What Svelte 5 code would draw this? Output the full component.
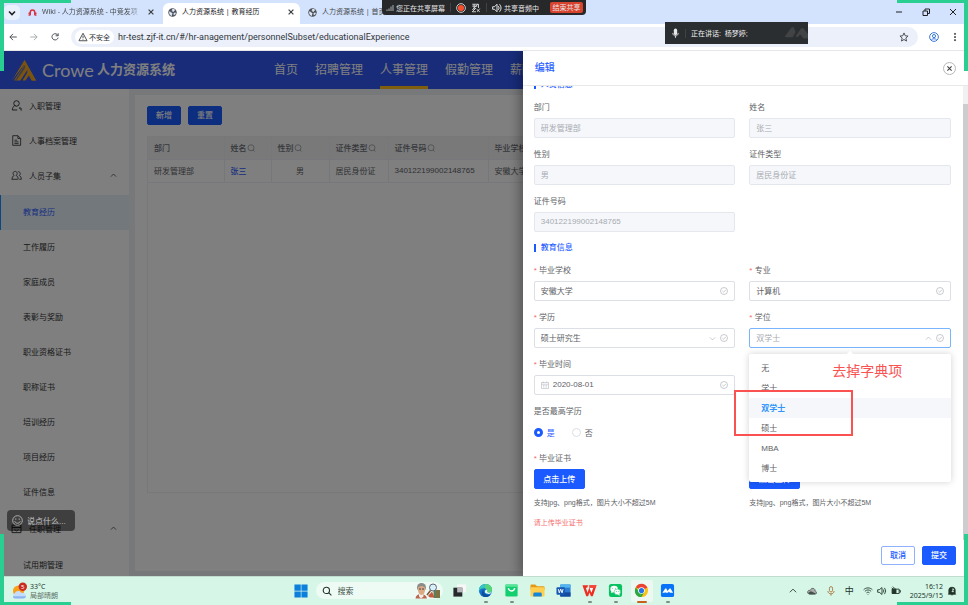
<script lang="ts">
  type MenuItem = { label: string; icon?: string; active?: boolean; children?: MenuItem[] };

  const nav = ['首页', '招聘管理', '人事管理', '假勤管理', '薪酬管理'];

  const menu: MenuItem[] = [
    { label: '入职管理', icon: 'user' },
    { label: '人事档案管理', icon: 'file' },
    {
      label: '人员子集',
      icon: 'users',
      children: [
        { label: '教育经历', active: true },
        { label: '工作履历' },
        { label: '家庭成员' },
        { label: '表彰与奖励' },
        { label: '职业资格证书' },
        { label: '职称证书' },
        { label: '培训经历' },
        { label: '项目经历' },
        { label: '证件信息' },
      ],
    },
    { label: '任职管理', icon: 'box', children: [{ label: '试用期管理' }] },
  ];

  const columns = [
    { label: '部门', search: false },
    { label: '姓名', search: true },
    { label: '性别', search: true },
    { label: '证件类型', search: true },
    { label: '证件号码', search: true },
    { label: '毕业学校', search: true },
  ];

  const personFields = [
    { id: 'dept', label: '部门', value: '研发管理部' },
    { id: 'name', label: '姓名', value: '张三' },
    { id: 'gender', label: '性别', value: '男' },
    { id: 'idType', label: '证件类型', value: '居民身份证' },
    { id: 'idNo', label: '证件号码', value: '340122199002148765' },
  ];

  const degrees = ['无', '学士', '双学士', '硕士', 'MBA', '博士'];
  const apps = ['tasks', 'edge', 'mail', 'folder', 'word', 'wps', 'wechat', 'chrome', 'meeting'];
  const running = ['edge', 'mail', 'wps', 'wechat', 'meeting'];

  let school = $state('安徽大学');
  let major = $state('计算机');
  let education = $state('硕士研究生');
  let degree = $state('双学士');
  let graduated = $state('2020-08-01');
  let highest = $state('yes');
</script>

{#snippet globe()}
  <svg class="globe" viewBox="0 0 16 16">
    <circle cx="8" cy="8" r="7.5" fill="#4d5156" />
    <path d="M2 6c2 0 3 1 4 2s2 1 2 2-1 1-1 2v2C4 14 2 11 2 8zM7 2c2-1 5 0 6 2l-2 1-1 2-2-1-2-1 2-1zM10 9l3-1 1 1c0 2-2 4-4 4z" fill="#dbe6f8" />
  </svg>
{/snippet}

{#snippet cross()}
  <svg class="cross" viewBox="0 0 10 10"><path d="M2 2l6 6M8 2l-6 6" stroke="#3c4043" stroke-width="1.5" /></svg>
{/snippet}

{#snippet check()}
  <svg class="check" viewBox="0 0 16 16" fill="none" stroke="#a4a8b0" stroke-width="1.2">
    <circle cx="8" cy="8" r="7" /><path d="M4.8 8l2.4 2.4 4.4-4.6" />
  </svg>
{/snippet}

{#snippet arrow(up: boolean)}
  <svg class="arrow" class:up viewBox="0 0 12 12" fill="none" stroke="currentColor" stroke-width="1.2"><path d="M1.5 4l4.500 4.500 4.500-4.500" /></svg>
{/snippet}

{#snippet menuIcon(name: string)}
  <svg class="menu-icon" viewBox="0 0 16 16" fill="none" stroke="#303133" stroke-width="1.4">
    {#if name === 'user'}
      <circle cx="8" cy="5" r="4" /><path d="M5.500 8C3 9.500 2 12 2 14.500h7M6 8l1 1M12 11.500l2 2 1-1-2-1.500zM14 14.500h2" />
    {:else if name === 'file'}
      <path d="M2.500 1h7.500l4 4v10h-11.500zM10 1v4h4M5 7.500h4M5 10h6M5 12.500h6" stroke-width="1.2" />
    {:else if name === 'users'}
      <path d="M1 13.500h9M1.500 13.500c0-3 1-4.500 3-5.500-3-3-1-6 1.500-6s4.500 3 1.500 6c2 1 3 2.500 3 5.500M10 2.500c3-.5 5 3 2 5.500 2 1 3 2.500 3 5.500h-3" stroke-width="1.2" />
    {:else}
      <path d="M1.500 3h13v11h-13zM1.500 6.500h13M5 9.500l3 2 3-2" />
    {/if}
  </svg>
{/snippet}

{#snippet appIcon(name: string)}
  <svg viewBox="0 0 32 32">
    {#if name === 'tasks'}
      <path d="M11 3h19v17H11z" fill="#f7f7f7" /><path d="M3 10h19v19H3z" fill="#26282b" /><path d="M11 10h11v10H11z" fill="#b7babb" />
    {:else if name === 'edge'}
      <circle cx="16" cy="16" r="14" fill="#1474c9" />
      <path d="M2 16C2 8 8 2 16 2s14 6 14 12c0 5-4 7-8 7-3 0-5-1-3-3 2-3-1-7-6-7-6 0-11 3-11 8z" fill="#35c6c0" />
      <path d="M16 2c8 0 14 6 14 12 0 5-4 7-8 7-3 0-5-1-3-3 2-3-1-6-4-7z" fill="#58d675" />
      <path d="M12 14c-2 8 5 13 14 11-3 4-7 5-11 5-7-1-10-10-3-16z" fill="#0d4e9c" />
      <path d="M18 14c4 2-1 5 3 6 4 2 8-1 9-3-1 5-5 7-10 6-5 0-8-6-2-9z" fill="#e8f8f3" />
    {:else if name === 'mail'}
      <rect x="3" y="3" width="26" height="26" rx="3" fill="#12cf70" /><path d="M3 3h26v5H3z" fill="#5ce59a" />
      <path d="M9 11c2 8 12 8 14 0" fill="none" stroke="#fff" stroke-width="3" />
    {:else if name === 'folder'}
      <path d="M1 5q0-2 2-2h8l4 4h14q2 0 2 2v6H1z" fill="#e29a14" /><rect x="1" y="9" width="30" height="20" rx="2" fill="#ffd04f" />
      <path d="M7 29v-6q0-3 3-3h12q3 0 3 3v6z" fill="#1684d8" />
    {:else if name === 'word'}
      <rect x="9" y="3" width="22" height="26" rx="2" fill="#2b7cd3" /><path d="M9 3h22v7H9z" fill="#51b5f0" /><path d="M9 20h22v9H9z" fill="#124a9d" />
      <rect x="1" y="9" width="18" height="16" rx="2" fill="#1659b3" /><path d="M5 13l2 8 3-8 3 8 2-8" fill="none" stroke="#fff" stroke-width="2" />
    {:else if name === 'wps'}
      <path d="M1 5h12l-2 5H8l4 11 5-16h14l-8 23h-4l-3-8-3 8H9z" fill="#ef2e22" /><path d="M16 10h8l-4 11z" fill="#fff" /><path d="M14 5h17l-2 5H17z" fill="#f9463b" />
    {:else if name === 'wechat'}
      <rect x="2" y="2" width="28" height="28" rx="5" fill="#08c160" />
      <ellipse cx="13" cy="13" rx="8" ry="7" fill="#fff" /><path d="M7 17v5l5-3z" fill="#fff" />
      <ellipse cx="20" cy="19" rx="7" ry="6" fill="#fff" stroke="#08c160" /><path d="M24 23l1 4-4-2z" fill="#fff" />
      <g fill="#08c160"><circle cx="10" cy="11" r="1" /><circle cx="16" cy="11" r="1" /><circle cx="18" cy="18" r="1" /><circle cx="23" cy="18" r="1" /></g>
    {:else if name === 'chrome'}
      <circle cx="16" cy="16" r="14" fill="#fbc116" />
      <path d="M16 16L4 9C9-1 24-1 28.500 10z" fill="#ea4335" /><path d="M4 9l9 15 3 6C3 30-1 18 4 9z" fill="#28a745" /><path d="M16 30l6-11-6-2-6 1z" fill="#28a745" />
      <circle cx="16" cy="16" r="7" fill="#fff" /><circle cx="16" cy="16" r="5.500" fill="#2374e8" />
    {:else}
      <rect x="2" y="2" width="28" height="28" rx="4" fill="#0872f9" />
      <path d="M5 21l6-9q2-2 3 1l2 4 4-5q2-2 3 1l5 8h-7l-2-3-2 3H12l-1-2-1 2z" fill="#fff" />
    {/if}
  </svg>
{/snippet}

<div class="desktop">
  <div class="tabs">
    <button class="tab-search" aria-label="搜索标签页">
      <svg viewBox="0 0 10 10" fill="none" stroke="#202124" stroke-width="1.600"><path d="M2 3.500l3 3 3-3" /></svg>
    </button>
    <div class="tab first">
      <svg class="globe" viewBox="0 0 16 16" fill="none" stroke="#d8313f" stroke-width="2.500"><path d="M1 13l3-1V8a4 4.500 0 0 1 8 0v4l3 1M4 8L1 10M12 8l3 2" /></svg>
      <span class="tab-title fade">Wiki - 人力资源系统 - 中竞发项</span>
      {@render cross()}
    </div>
    <div class="tab active">
      {@render globe()}
      <span class="tab-title">人力资源系统 | 教育经历</span>
      {@render cross()}
    </div>
    <div class="tab">
      {@render globe()}
      <span class="tab-title">人力资源系统 | 首页</span>
    </div>
    <div class="window-controls">
      <svg viewBox="0 0 10 10"><path d="M2 5h6" /></svg>
      <svg viewBox="0 0 10 10"><path d="M2 4h4.500v4.500H2zM4 4V2h4.500v4.500h-2" /></svg>
      <svg viewBox="0 0 10 10"><path d="M2 2l6 6M8 2L2 8" /></svg>
    </div>
  </div>

  <div class="toolbar">
    <svg viewBox="0 0 16 16"><path d="M14 8H3M8 3L3 8l5 5" /></svg>
    <svg class="dim" viewBox="0 0 16 16"><path d="M2 8h11M8 3l5 5-5 5" /></svg>
    <svg viewBox="0 0 16 16"><path d="M13 9a5 5 0 1 1-1.500-5L13 5.500M13 2v4H9" /></svg>
    <div class="address">
      <span class="chip">
        <svg viewBox="0 0 16 16"><path d="M8 2l6.500 12h-13zM8 6v4M8 11.500v1" /></svg>
        不安全
      </span>
      <input class="url" aria-label="地址" value="hr-test.zjf-it.cn/#/hr-anagement/personnelSubset/educationalExperience" />
      <svg viewBox="0 0 16 16"><path d="M8 1.500l2 4.500 4.500.5-3.500 3 1 5-4-2.500L4 14.500l1-5-3.500-3L6 6z" /></svg>
    </div>
    <svg class="profile" viewBox="0 0 16 16"><circle cx="8" cy="8" r="7" /><circle cx="8" cy="6.500" r="2.500" /><path d="M3.500 13c2-3 7-3 9 0" /></svg>
    <svg class="kebab" viewBox="0 0 16 16"><circle cx="8" cy="3" r="1" /><circle cx="8" cy="8" r="1" /><circle cx="8" cy="13" r="1" /></svg>
  </div>

  <div class="page">
    <header class="app-header">
      <svg class="logo" viewBox="0 0 48 42">
        <path d="M0 41L25 0l23 41h-8L26 13 9 41h-5l22-34z" fill="#f5a81c" />
        <path d="M9 41L27 14l4 6-14 21zM21 41l11-18 3 6-8 12z" fill="#f5a81c" />
        <path d="M25 0l23 41h-9L24 12z" fill="#f5a81c" />
        <path d="M7 41L26 11M18 41l13-20" stroke="#3058f0" stroke-width="1.500" />
      </svg>
      <span class="brand">Crowe</span>
      <h1>人力资源系统</h1>
      <nav>
        {#each nav as item (item)}
          <a href="#/{item}" class:current={item === '人事管理'}>{item}</a>
        {/each}
      </nav>
    </header>

    <div class="app-body">
      <aside>
        {#each menu as item (item.label)}
          <a class="menu-item" href="#/{item.label}">
            {@render menuIcon(item.icon ?? '')}
            <span>{item.label}</span>
            {#if item.children}{@render arrow(true)}{/if}
          </a>
          {#if item.children}
            <div class="submenu">
              {#each item.children as child (child.label)}
                <a class="menu-item child" class:active={child.active} href="#/{child.label}">{child.label}</a>
              {/each}
            </div>
          {/if}
        {/each}
      </aside>

      <main>
        <div class="actions">
          <button class="btn primary">新增</button>
          <button class="btn primary">重置</button>
        </div>
        <div class="table-wrap">
          <table>
            <colgroup>
              <col class="c-dept" /><col class="c-name" /><col class="c-gender" /><col class="c-type" /><col class="c-no" /><col />
            </colgroup>
            <thead>
              <tr>
                {#each columns as column (column.label)}
                  <th>
                    {column.label}{#if column.search}
                      <svg viewBox="0 0 16 16" fill="none" stroke="#909399" stroke-width="1.500"><circle cx="8" cy="7.500" r="6" /><path d="M12 12l3 3" /></svg>
                    {/if}
                  </th>
                {/each}
              </tr>
            </thead>
            <tbody>
              <tr>
                <td>研发管理部</td>
                <td><a href="#/detail">张三</a></td>
                <td class="center">男</td>
                <td>居民身份证</td>
                <td>340122199002148765</td>
                <td>安徽大学</td>
              </tr>
            </tbody>
          </table>
        </div>
      </main>
    </div>

    <div class="mask"></div>

    <section class="drawer">
      <header class="drawer-header">
        <h2>编辑</h2>
        <button class="close" aria-label="关闭">{@render cross()}</button>
      </header>

      <div class="drawer-body">
        <form class="grid">
          <h3 class="top">人员信息</h3>
          {#each personFields as field (field.id)}
            <div class="field">
              <label for={field.id}>{field.label}</label>
              <div class="control disabled"><input id={field.id} value={field.value} disabled /></div>
            </div>
          {/each}

          <h3>教育信息</h3>
          <div class="field required">
            <label for="school">毕业学校</label>
            <div class="control"><input id="school" bind:value={school} />{@render check()}</div>
          </div>
          <div class="field required">
            <label for="major">专业</label>
            <div class="control"><input id="major" bind:value={major} />{@render check()}</div>
          </div>
          <div class="field required">
            <label for="education">学历</label>
            <div class="control">
              <select id="education" bind:value={education}><option>硕士研究生</option></select>
              {@render arrow(false)}{@render check()}
            </div>
          </div>
          <div class="field required">
            <label for="degree">学位</label>
            <div class="control open">
              <select id="degree" bind:value={degree}>
                {#each degrees as option (option)}<option>{option}</option>{/each}
              </select>
              {@render arrow(true)}{@render check()}
              <div class="dropdown">
                <ul>
                  {#each degrees as option (option)}
                    <li class:selected={option === degree}>{option}</li>
                  {/each}
                </ul>
                <span class="note">去掉字典项</span>
                <span class="note-box"></span>
              </div>
            </div>
          </div>
          <div class="field required wide">
            <label for="graduated">毕业时间</label>
            <div class="control">
              <svg class="calendar" viewBox="0 0 16 16" fill="none" stroke="#b4b8c0" stroke-width="1.200"><path d="M1 3h14v12H1zM1 6.500h14M4.500 1v3M11.500 1v3M4 9h2M7 9h2M10 9h2M4 12h2M7 12h2M10 12h2" /></svg>
              <input id="graduated" bind:value={graduated} />{@render check()}
            </div>
          </div>
          <div class="field wide" role="radiogroup" aria-label="是否最高学历">
            <span class="label">是否最高学历</span>
            <div class="radios">
              <label class:on={highest === 'yes'}><input type="radio" value="yes" bind:group={highest} />是</label>
              <label class:on={highest === 'no'}><input type="radio" value="no" bind:group={highest} />否</label>
            </div>
          </div>
          <div class="field required">
            <span class="label">毕业证书</span>
            <button type="button" class="btn primary upload">点击上传</button>
            <p class="hint">支持jpg、png格式，图片大小不超过5M</p>
            <p class="error">请上传毕业证书</p>
          </div>
          <div class="field required">
            <span class="label">学位证书</span>
            <button type="button" class="btn primary upload">点击上传</button>
            <p class="hint">支持jpg、png格式，图片大小不超过5M</p>
          </div>
        </form>
        <div class="scrollbar"></div>
      </div>

      <footer class="drawer-footer">
        <button class="btn">取消</button>
        <button class="btn primary">提交</button>
      </footer>
    </section>

    <div class="chat">
      <svg viewBox="0 0 16 16" fill="none" stroke="#c4c4c4" stroke-width="1.200"><circle cx="8" cy="8" r="7" /><path d="M4 9c1 4 7 4 8 0M5.500 5v2M10.500 5v2" /></svg>
      说点什么...
    </div>
  </div>

  <footer class="taskbar">
    <div class="weather">
      <svg viewBox="0 0 32 36">
        <circle cx="14" cy="18" r="12" fill="#f6a21c" />
        <path d="M6 34a6 6 0 0 1 0-11c2-6 11-7 14-1 6-1 11 3 10 8q-1 4-6 4z" fill="#c6dcfb" /><path d="M6 34q-5-1-4-5h28q-1 5-6 5z" fill="#8cb5f0" />
        <circle cx="23" cy="9" r="9" fill="#c92c20" />
        <text x="23" y="14" text-anchor="middle" fill="#fff" font-size="13">5</text>
      </svg>
      <div><div>33°C</div><div class="muted">局部晴朗</div></div>
    </div>

    <div class="dock">
      <svg class="start" viewBox="0 0 32 32" fill="#0b7fdb"><path d="M1 1h14.500v14.500H1zM17 1h14v14.500H17zM1 17h14.500v14H1zM17 17h14v14H17z" /></svg>
      <label class="search">
        <svg viewBox="0 0 16 16" fill="none" stroke="#22352c" stroke-width="1.800"><circle cx="7" cy="7" r="5" /><path d="M11 11l4 4" /></svg>
        <input aria-label="搜索" placeholder="搜索" />
        <svg class="highlight" viewBox="0 0 52 32">
          <path d="M1 31q1-9 11-9t12 9z" fill="#b8674f" /><path d="M8 20h9v7l-5 4-4-4z" fill="#f2ede6" />
          <circle cx="13" cy="9" r="9" fill="#8b8b87" /><path d="M6 9q7-6 14 0v6q-1 8-7 9-6-1-7-9z" fill="#dda984" /><path d="M8 12h4M14 12h4" stroke="#444" stroke-width="2" />
          <path d="M37 14h13v16H37z" fill="#a4642c" /><path d="M40 14v16M46 14v16" stroke="#3d8a6b" stroke-width="3" />
          <path d="M26 26l8-9 5 12h-9z" fill="#c45b42" /><circle cx="36" cy="9" r="7" fill="#d9effa" stroke="#5b6974" stroke-width="2" /><path d="M31 15l-7 9" stroke="#74553a" stroke-width="3" />
        </svg>
      </label>
      {#each apps as app (app)}
        <button class="app" class:focused={app === 'chrome'} class:running={running.includes(app)} aria-label={app}>
          {@render appIcon(app)}
        </button>
      {/each}
    </div>

    <div class="tray">
      <svg viewBox="0 0 16 16"><path d="M3 10l5-5 5 5" /></svg>
      <svg viewBox="0 0 16 16"><path d="M4 13q-4-1-3-4t4-2q2-5 6-3 2 1 2 4 3 1 2 4l-2 1z" fill="#aaa" stroke="#5d6b64" /><path d="M2 11q4-4 6-2l6 3-2 1H4z" fill="#42524a" stroke="none" /></svg>
      <svg class="mic" viewBox="0 0 16 16"><rect x="5.500" y="1" width="5" height="8.500" rx="2.500" /><path d="M3 8c0 6 10 6 10 0M8 12.500v3" /></svg>
      <span class="ime">中</span>
      <div class="status">
        <svg viewBox="0 0 16 16"><path d="M1 6c4-4 10-4 14 0M3 8.500c3-3 7-3 10 0M5.500 11c1.500-1.500 3.500-1.500 5 0M8 13v1" /></svg>
        <svg viewBox="0 0 16 16"><path d="M1 6h2.500L8 2.500v11L3.500 10H1zM10 5.500q2 2.500 0 5M12 3q4 5 0 10" /></svg>
        <svg viewBox="0 0 16 16"><path d="M2 5h11v7H2zM13 7h2v3h-2" /><path d="M2 5h6v7H2zM3 1l3 3M1 3l3 2" fill="#22352c" /></svg>
      </div>
      <div class="clock"><div>16:12</div><div>2025/9/15</div></div>
      <svg viewBox="0 0 16 16"><path d="M3 12V6q0-4 5-4t5 4v6l1 1H2zM6 14h4" fill="#22352c" /><path d="M8 5h3l-3 4h3" stroke="#d6f7e8" /></svg>
    </div>
  </footer>

  <div class="share-bar">
    <svg viewBox="0 0 16 16" fill="none" stroke="#ddd" stroke-width="1.500"><path d="M2 14v-3M6 14V9M10 14V5M14 14V2" /></svg>
    <span>您正在共享屏幕</span>
    <i></i>
    <svg class="big" viewBox="0 0 16 16"><circle cx="8" cy="8" r="7" fill="none" stroke="#eee" stroke-width="1.300" /><circle cx="8" cy="8" r="5" fill="#f4502f" /></svg>
    <svg class="big" viewBox="0 0 16 16" fill="none" stroke="#eee" stroke-width="1.300"><path d="M2 2h10v6M2 14h6M2 5h8M5 2v9M2 11l9-9M2 14l6-6M9 10l5 4M14 9l-4 5" /></svg>
    <i></i>
    <svg class="big" viewBox="0 0 16 16" fill="none" stroke="#eee" stroke-width="1.500"><path d="M1 6h3l4-4v12l-4-4H1zM10 5q3 3 0 6M12 2q5 6 0 12" /></svg>
    <span>共享音频中</span>
    <button>结束共享</button>
  </div>

  <div class="speaking">
    <svg class="voice" viewBox="0 0 16 20"><rect x="5" y="1" width="6" height="12" rx="3" fill="#e8e8e8" /><path d="M3 9c0 7 10 7 10 0M8 14v4" fill="none" stroke="#e8e8e8" stroke-width="1.500" /></svg>
    <i></i>
    <span>正在讲话:&nbsp; 杨梦婷;</span>
    <svg class="mark" viewBox="0 0 66 40"><path d="M0 29L18 5q6-5 9 3l3 10-8 14H5q-6 0-5-3zM30 29L46 7q6-4 9 3l11 13v13H53l-9-12-8 8z" fill="#414345" /></svg>
  </div>

  <span class="corner tl"></span>
  <span class="corner tr"></span>
  <span class="corner bl"></span>
  <span class="corner br"></span>
</div>

<style>
  :global(body) {
    margin: 0;
    font-family: 'Liberation Sans', 'Noto Sans CJK SC', sans-serif;
  }

  .desktop {
    position: relative;
    display: flex;
    flex-direction: column;
    height: 100vh;
    overflow: hidden;
    font-size: 8px;
    color: #606266;
  }

  a {
    color: inherit;
    text-decoration: none;
  }

  button,
  input,
  select {
    font: inherit;
    color: inherit;
    box-sizing: border-box;
    margin: 0;
    padding: 0;
    border: none;
    background: none;
    outline: none;
  }

  svg {
    display: block;
    flex: none;
  }

  h1,
  h2,
  h3,
  p,
  ul {
    margin: 0;
    padding: 0;
    list-style: none;
  }

  /* browser chrome */
  .tabs {
    display: flex;
    align-items: stretch;
    height: 24px;
    flex: none;
    padding-left: 4px;
    background: #d3e3fd;
    font-family: 'Noto Sans', 'Noto Sans CJK SC', sans-serif;
    font-size: 7px;
    color: #45494d;
  }

  .tab-search {
    align-self: center;
    width: 16px;
    height: 15px;
    padding: 3px;
    border-radius: 5px;
    background: #e9f1fe;
  }

  .tab {
    display: flex;
    align-items: center;
    gap: 5px;
    box-sizing: border-box;
    width: 137px;
    padding: 0 5px;
    line-height: 24px;
  }

  .tab.first {
    width: 143px;
    padding-left: 8px;
    padding-right: 8px;
  }

  .tab.active {
    margin-top: 3px;
    margin-right: 3px;
    border-radius: 6px 6px 0 0;
    background: #fff;
    color: #202124;
    line-height: 18px;
    padding-bottom: 3px;
  }

  .tab-title {
    flex: 1;
    overflow: hidden;
    white-space: nowrap;
  }

  .fade {
    mask-image: linear-gradient(90deg, #000 85%, transparent);
  }

  .globe {
    width: 9px;
    height: 9px;
  }

  .cross {
    width: 8px;
    height: 8px;
  }

  .window-controls {
    display: flex;
    align-items: center;
    gap: 17px;
    margin-left: auto;
    padding-right: 10px;
  }

  .window-controls svg {
    width: 10px;
    height: 10px;
    fill: none;
    stroke: #202124;
  }

  .toolbar {
    display: flex;
    align-items: center;
    gap: 11px;
    height: 27px;
    flex: none;
    box-sizing: border-box;
    padding: 0 8px;
    border-bottom: 1px solid #e4e6ea;
    background: #fff;
  }

  .toolbar svg {
    width: 10px;
    height: 10px;
    fill: none;
    stroke: #45494d;
    stroke-width: 1.5;
  }

  .toolbar svg.dim {
    stroke: #a4a7ab;
  }

  .toolbar svg.profile {
    stroke: #2f6fd8;
  }

  .toolbar svg.kebab {
    fill: #45494d;
  }

  .address {
    display: flex;
    align-items: center;
    flex: 1;
    height: 20px;
    box-sizing: border-box;
    padding: 0 9px 0 4px;
    border-radius: 10px;
    background: #ebf0fa;
    font-family: Roboto, 'Noto Sans CJK SC', sans-serif;
  }

  .chip {
    display: flex;
    align-items: center;
    gap: 1px;
    height: 14px;
    padding: 0 4px 0 3px;
    border-radius: 7px;
    background: #fff;
    font-size: 7px;
    color: #303338;
  }

  .url {
    flex: 1;
    min-width: 0;
    margin-left: 4px;
    font-size: 9px;
    color: #33373c;
  }

  /* application */
  .page {
    position: relative;
    display: flex;
    flex-direction: column;
    flex: 1;
    min-height: 0;
    overflow: hidden;
    background: #eff0f2;
  }

  .app-header {
    display: flex;
    align-items: center;
    flex: none;
    height: 38px;
    padding-left: 12px;
    background: #3058f4;
    color: #fff;
  }

  .logo {
    width: 24px;
    height: 21px;
  }

  .brand {
    margin-left: 6px;
    width: 55px;
    font-family: Lato, sans-serif;
    font-size: 18px;
    font-weight: 400;
  }

  h1 {
    font-size: 13px;
    line-height: 38px;
  }

  nav {
    display: flex;
    gap: 17px;
    margin-left: 99px;
    font-size: 12px;
    line-height: 38px;
    white-space: nowrap;
  }

  nav a {
    height: 38px;
    box-sizing: border-box;
  }

  nav a.current {
    border-bottom: 3px solid #ffbe1a;
  }

  .app-body {
    display: flex;
    flex: 1;
    min-height: 0;
    gap: 6px;
  }

  aside {
    width: 129px;
    flex: none;
    overflow: hidden;
    background: #fff;
    color: #303133;
  }

  .menu-item {
    display: flex;
    align-items: center;
    box-sizing: border-box;
    height: 35px;
    padding: 0 12px 2px 11px;
  }

  .menu-item span {
    flex: 1;
    margin-left: 7px;
  }

  .menu-item.child {
    padding-left: 23px;
  }

  .menu-item.active {
    border-left: 1px solid #1890ff;
    padding-left: 22px;
    background: #e6f1fb;
    color: #2a5bff;
  }

  .submenu {
    padding: 1px 0 2px;
  }

  .menu-icon {
    width: 11px;
    height: 11px;
  }

  .arrow {
    width: 7px;
    height: 7px;
  }

  .arrow.up {
    transform: rotate(180deg);
  }

  main {
    display: flex;
    flex-direction: column;
    flex: 1;
    min-width: 0;
    box-sizing: border-box;
    margin: 6px 6px 5px 0;
    padding: 11px 12px 78px;
    background: #fff;
  }

  .actions {
    display: flex;
    gap: 7px;
    margin-bottom: 11px;
  }

  .btn {
    height: 19px;
    box-sizing: border-box;
    padding: 0 8px;
    min-width: 34px;
    border: 1px solid #8fb0ff;
    border-radius: 2px;
    background: #fff;
    color: #1a5aff;
    line-height: 17px;
    font-weight: 500;
  }

  .btn.primary {
    border-color: #1a5aff;
    background: #1a5aff;
    color: #fff;
  }

  .table-wrap {
    flex: 1;
    border: 1px solid #f0f1f5;
  }

  table {
    width: 100%;
    table-layout: fixed;
    border-collapse: collapse;
  }

  .c-dept {
    width: 76px;
  }

  .c-name {
    width: 47px;
  }

  .c-gender {
    width: 58px;
  }

  .c-type {
    width: 59px;
  }

  .c-no {
    width: 100px;
  }

  th,
  td {
    height: 20px;
    padding: 0 0 2px 6px;
    border-right: 1px solid #ebeef5;
    border-bottom: 1px solid #ebeef5;
    text-align: left;
    white-space: nowrap;
  }

  th {
    background: #f3f3f4;
    font-weight: 500;
    color: #6b6e75;
  }

  th svg {
    display: inline-block;
    width: 8px;
    height: 8px;
    vertical-align: -1px;
  }

  td.center {
    padding-left: 0;
    text-align: center;
  }

  td a {
    color: #2a5bff;
    font-weight: 500;
  }

  .mask {
    position: absolute;
    inset: 0;
    background: rgba(0, 0, 0, 0.5);
  }

  /* edit drawer */
  .drawer {
    position: absolute;
    inset: 0 0 0 auto;
    display: flex;
    flex-direction: column;
    width: 46%;
    background: #fff;
    box-shadow: -4px 0 10px rgba(0, 0, 0, 0.3);
  }

  .drawer-header {
    display: flex;
    align-items: center;
    justify-content: space-between;
    flex: none;
    height: 34px;
    padding: 0 12px;
    border-bottom: 1px solid #e8e8e8;
  }

  h2 {
    font-size: 10px;
    font-weight: 500;
    line-height: 14px;
    color: #2a62ff;
  }

  .close {
    display: grid;
    place-items: center;
    width: 13px;
    height: 13px;
    border: 1px solid #b8b8b8;
    border-radius: 50%;
  }

  .close :global(svg) {
    width: 7px;
    height: 7px;
  }

  .drawer-body {
    display: flex;
    flex: 1;
    min-height: 0;
    overflow: hidden;
  }

  .scrollbar {
    width: 5px;
    flex: none;
    border-top: 18px solid #f1f1f1;
    background: #cdcdcf;
  }

  .grid {
    display: grid;
    grid-template-columns: 1fr 1fr;
    align-content: start;
    column-gap: 14px;
    flex: 1;
    min-width: 0;
    padding: 0 12px 0 11px;
  }

  h3 {
    display: flex;
    align-items: center;
    gap: 5px;
    grid-column: 1 / -1;
    height: 22px;
    font-size: 8px;
    font-weight: 500;
    line-height: 10px;
    color: #2a62ff;
  }

  h3::before {
    content: '';
    width: 2px;
    height: 8px;
    background: #1a5aff;
  }

  h3.top {
    margin-top: -12px;
  }

  .field {
    margin-bottom: 5px;
  }

  .field.wide {
    grid-column: 1 / -1;
    width: calc(50% - 7px);
  }

  .field > label,
  .label {
    display: block;
    height: 22px;
    line-height: 24px;
  }

  .required > label::before,
  .required > .label::before {
    content: '* ';
    color: #f56c6c;
  }

  .control {
    position: relative;
    display: flex;
    align-items: center;
    gap: 4px;
    height: 20px;
    box-sizing: border-box;
    padding: 0 6px;
    border: 1px solid #dcdfe6;
    border-radius: 2px;
  }

  .control.disabled {
    border-color: #e4e7ed;
    background: #f5f7fa;
    color: #a8abb2;
  }

  .control.open {
    border-color: #79b4ff;
    color: #a8abb2;
  }

  .control input,
  .control select {
    flex: 1;
    min-width: 0;
    height: 18px;
    appearance: none;
  }

  .control input {
    padding-bottom: 2px;
  }

  .control .arrow {
    color: #b4b8c0;
  }

  .check {
    width: 8px;
    height: 8px;
  }

  .calendar {
    width: 8px;
    height: 8px;
  }

  .dropdown {
    position: absolute;
    z-index: 2;
    top: 25px;
    left: -1px;
    right: -1px;
    padding: 4px 0;
    border-radius: 2px;
    background: #fff;
    color: #606266;
    box-shadow: 0 0 7px rgba(0, 0, 0, 0.18);
  }

  .dropdown::before {
    content: '';
    position: absolute;
    top: -2px;
    left: calc(50% - 3px);
    width: 6px;
    height: 6px;
    background: #fff;
    transform: rotate(45deg);
  }

  .dropdown li {
    height: 20px;
    padding-left: 12px;
    line-height: 22px;
  }

  .dropdown li.selected {
    background: #f5f7fa;
    color: #3296fa;
    font-weight: 700;
  }

  .note {
    position: absolute;
    top: 6px;
    left: 83px;
    font-size: 14px;
    line-height: 22px;
    color: #fa5151;
    white-space: nowrap;
  }

  .note-box {
    position: absolute;
    top: 36px;
    left: -15px;
    width: 115px;
    height: 42px;
    border: 2px solid #fa5151;
  }

  .radios {
    display: flex;
    gap: 17px;
    height: 20px;
  }

  .radios label {
    display: flex;
    align-items: center;
    gap: 4px;
  }

  .radios label.on {
    color: #1a5aff;
  }

  .radios input {
    width: 9px;
    height: 9px;
    border: 1px solid #dcdfe6;
    border-radius: 50%;
    appearance: none;
  }

  .radios input:checked {
    border: 3px solid #1a5aff;
  }

  .upload {
    display: block;
    height: 20px;
    width: 51px;
  }

  .hint,
  .error {
    font-size: 7px;
    line-height: 20px;
  }

  .hint {
    margin-top: 4px;
  }

  .error {
    color: #f56c6c;
  }

  .drawer-footer {
    display: flex;
    justify-content: flex-end;
    gap: 7px;
    flex: none;
    padding: 6px 12px 11px;
  }

  .chat {
    position: absolute;
    left: 7px;
    bottom: 45px;
    display: flex;
    align-items: center;
    gap: 4px;
    width: 63px;
    height: 21px;
    padding-left: 5px;
    border-radius: 4px;
    background: rgba(0, 0, 0, 0.5);
    color: #c4c4c4;
  }

  .chat svg {
    width: 11px;
    height: 11px;
  }

  /* taskbar */
  .taskbar {
    display: grid;
    grid-template-columns: 1fr auto 1fr;
    align-items: center;
    height: 29px;
    flex: none;
    box-sizing: border-box;
    border-top: 1px solid #bfdccf;
    padding-bottom: 1px;
    background: #d6f7e8;
    color: #22352c;
    font-family: 'Noto Sans', 'Noto Sans CJK SC', sans-serif;
    font-size: 7px;
    line-height: 9px;
  }

  .weather {
    display: flex;
    gap: 3px;
    padding-left: 12px;
  }

  .weather svg {
    width: 15px;
    height: 18px;
  }

  .muted {
    color: #5c6e65;
  }

  .dock {
    display: flex;
    align-items: center;
    gap: 4px;
    padding-left: 4px;
  }

  .start {
    width: 14px;
    height: 14px;
    margin-right: 4px;
  }

  .search {
    display: flex;
    align-items: center;
    gap: 6px;
    width: 119px;
    height: 17px;
    padding: 0 2px 0 6px;
    margin-right: 2px;
    border-radius: 9px;
    background: #eefbf5;
    font-size: 8px;
  }

  .search svg {
    width: 10px;
    height: 10px;
  }

  .search input {
    flex: 1;
    min-width: 0;
  }

  .search input::placeholder {
    color: #3c5146;
    opacity: 1;
  }

  .search .highlight {
    width: 26px;
    height: 16px;
  }

  .app {
    display: grid;
    justify-items: center;
    align-content: center;
    position: relative;
    width: 22px;
    height: 22px;
    border-radius: 2px;
  }

  .app.focused {
    background: #ecf8f1;
  }

  .app :global(svg) {
    width: 15px;
    height: 15px;
  }

  .app.running::after,
  .app.focused::after {
    content: '';
    position: absolute;
    bottom: -1px;
    left: calc(50% - 2px);
    width: 4px;
    height: 2px;
    border-radius: 1px;
    background: #7d8d85;
  }

  .app.focused::after {
    left: calc(50% - 5px);
    width: 10px;
    background: #c4621c;
  }

  .tray {
    display: flex;
    align-items: center;
    justify-content: flex-end;
    gap: 9px;
    padding-right: 11px;
  }

  .tray svg {
    width: 10px;
    height: 10px;
    fill: none;
    stroke: #22352c;
    stroke-width: 1.4;
  }

  .tray svg.mic {
    stroke: #a8743c;
  }

  .ime {
    font-size: 9px;
  }

  .status {
    display: flex;
    gap: 4px;
  }

  .clock {
    margin-right: -5px;
    text-align: right;
  }

  /* windows of the meeting client */
  .share-bar {
    position: absolute;
    top: 0;
    left: 382px;
    display: flex;
    align-items: center;
    gap: 5px;
    box-sizing: border-box;
    width: 204px;
    height: 15px;
    padding: 0 3px 0 4px;
    border-radius: 0 0 4px 4px;
    background: #27282a;
    color: #e6e6e6;
    font-size: 7px;
    white-space: nowrap;
  }

  .share-bar svg {
    width: 8px;
    height: 8px;
  }

  .share-bar span {
    margin-left: -3px;
  }

  .share-bar svg.big {
    width: 10px;
    height: 10px;
  }

  .share-bar i,
  .speaking i {
    width: 1px;
    height: 9px;
    background: #414244;
  }

  .share-bar button {
    width: 33px;
    height: 11px;
    margin-left: auto;
    border-radius: 2px;
    background: #d8432f;
    line-height: 11px;
  }

  .speaking {
    position: absolute;
    top: 22px;
    left: 665px;
    display: flex;
    align-items: center;
    gap: 5px;
    box-sizing: border-box;
    width: 143px;
    height: 22px;
    padding-left: 6px;
    background: #2b2e31;
    color: #f0f0f0;
    font-size: 7px;
  }

  .voice {
    width: 9px;
    height: 11px;
  }

  .mark {
    width: 23px;
    height: 14px;
    margin-left: auto;
  }

  .corner {
    position: absolute;
    box-sizing: border-box;
    width: 71px;
    height: 71px;
    border: 0 solid #28cf90;
    pointer-events: none;
  }

  .tl {
    top: 0;
    left: 0;
    border-width: 3px 0 0 4px;
  }

  .tr {
    top: 0;
    right: 0;
    border-width: 3px 4px 0 0;
  }

  .bl {
    bottom: 0;
    left: 0;
    border-width: 0 0 3px 4px;
  }

  .br {
    right: 0;
    bottom: 0;
    border-width: 0 4px 3px 0;
  }
</style>
